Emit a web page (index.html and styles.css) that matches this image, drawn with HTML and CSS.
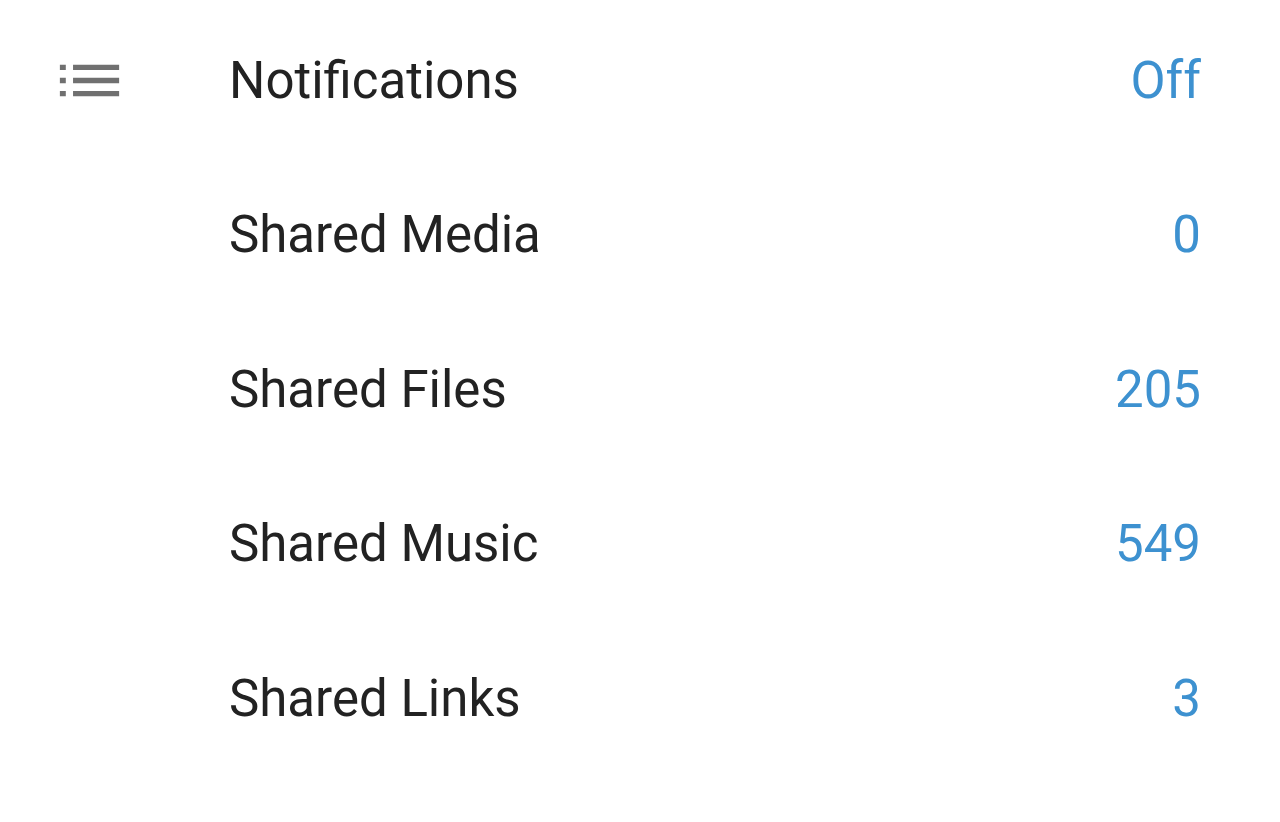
FILE: index.html
```html
<!DOCTYPE html>
<html>
<head>
<meta charset="utf-8">
<link rel="stylesheet" href="styles.css">
</head>
<body>
<div class="list">
  <div class="row">
    <div class="icon">
      <svg viewBox="0 0 24 24" width="79" height="79"><path fill="#707070" d="M3 12.8h1.8v-1.6H3v1.6zm0 4h1.8v-1.6H3v1.6zm0-8h1.8V7.2H3v1.6zm4 4h14v-1.6H7v1.6zm0 4h14v-1.6H7v1.6zM7 7.2v1.6h14V7.2H7z"/></svg>
    </div>
    <div class="label">Notifications</div>
    <div class="value">Off</div>
  </div>
  <div class="row">
    <div class="icon"></div>
    <div class="label">Shared Media</div>
    <div class="value">0</div>
  </div>
  <div class="row">
    <div class="icon"></div>
    <div class="label">Shared Files</div>
    <div class="value">205</div>
  </div>
  <div class="row">
    <div class="icon"></div>
    <div class="label">Shared Music</div>
    <div class="value">549</div>
  </div>
  <div class="row">
    <div class="icon"></div>
    <div class="label">Shared Links</div>
    <div class="value">3</div>
  </div>
</div>
</body>
</html>
```
FILE: styles.css
```css
html, body {
  margin: 0;
  padding: 0;
  background: #ffffff;
}
body {
  font-family: Roboto, "Noto Sans", sans-serif;
  width: 1280px;
  height: 822px;
  overflow: hidden;
}
.list {
  display: flex;
  flex-direction: column;
  padding-top: 3px;
}
.row {
  display: flex;
  align-items: center;
  height: 154.5px;
  padding: 0 79px 0 50px;
}
.icon {
  width: 79px;
  height: 79px;
  flex: 0 0 79px;
  margin-right: 100px;
  display: flex;
  align-items: center;
}
.icon svg {
  display: block;
}
.label {
  flex: 1;
  font-size: 51px;
  color: #222222;
}
.value {
  font-size: 51px;
  color: #3d91d0;
}
```
